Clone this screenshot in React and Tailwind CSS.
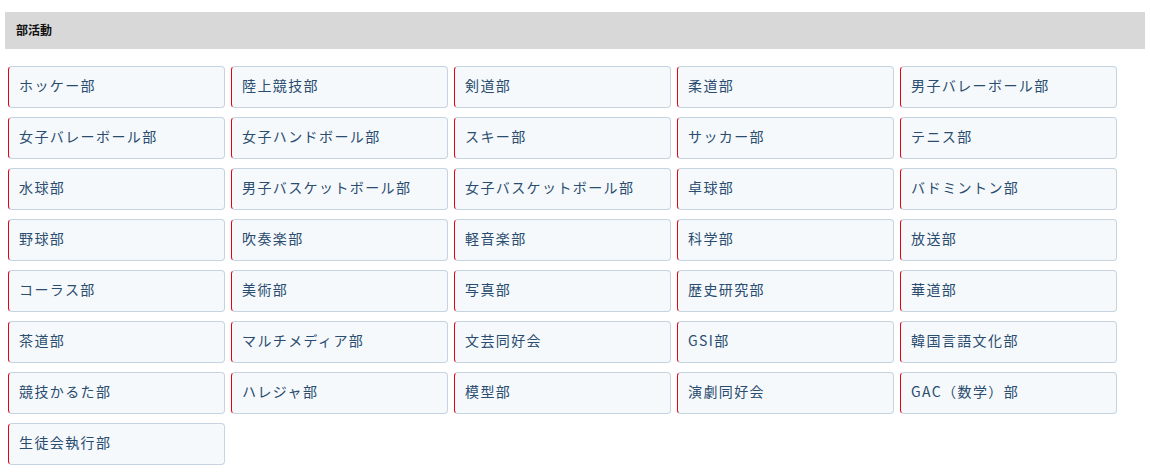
/**
 * ClubList — grid of school club links under a section header.
 */

const clubs = [
  'ホッケー部', '陸上競技部', '剣道部', '柔道部', '男子バレーボール部',
  '女子バレーボール部', '女子ハンドボール部', 'スキー部', 'サッカー部', 'テニス部',
  '水球部', '男子バスケットボール部', '女子バスケットボール部', '卓球部', 'バドミントン部',
  '野球部', '吹奏楽部', '軽音楽部', '科学部', '放送部',
  'コーラス部', '美術部', '写真部', '歴史研究部', '華道部',
  '茶道部', 'マルチメディア部', '文芸同好会', 'GSI部', '韓国言語文化部',
  '競技かるた部', 'ハレジャ部', '模型部', '演劇同好会', 'GAC（数学）部',
  '生徒会執行部',
];

export default function App() {
  return (
    <div className="min-h-screen bg-white pt-[12px] px-[5px] font-['Noto_Sans_CJK_JP','Noto_Sans',sans-serif]">
      {/* Section header */}
      <div className="h-[37px] w-[1140px] bg-[#d8d8d8] flex items-center pl-[11px] pb-[2px]">
        <h2 className="text-[12px] font-bold text-[#111]">部活動</h2>
      </div>

      {/* Club grid */}
      <ul className="mt-[17px] ml-[3px] w-[1109px] grid grid-cols-5 gap-x-[6px] gap-y-[9px]">
        {clubs.map((name) => (
          <li key={name}>
            <a
              href="#"
              className="h-[42px] flex items-center pl-[10px] pb-[3px] bg-[#f5f9fc] border border-[#c6d4e2] border-l-[#e60012] rounded-[4px] text-[14px] tracking-[1.4px] text-[#2a4c6e]"
            >
              {name}
            </a>
          </li>
        ))}
      </ul>
    </div>
  );
}
